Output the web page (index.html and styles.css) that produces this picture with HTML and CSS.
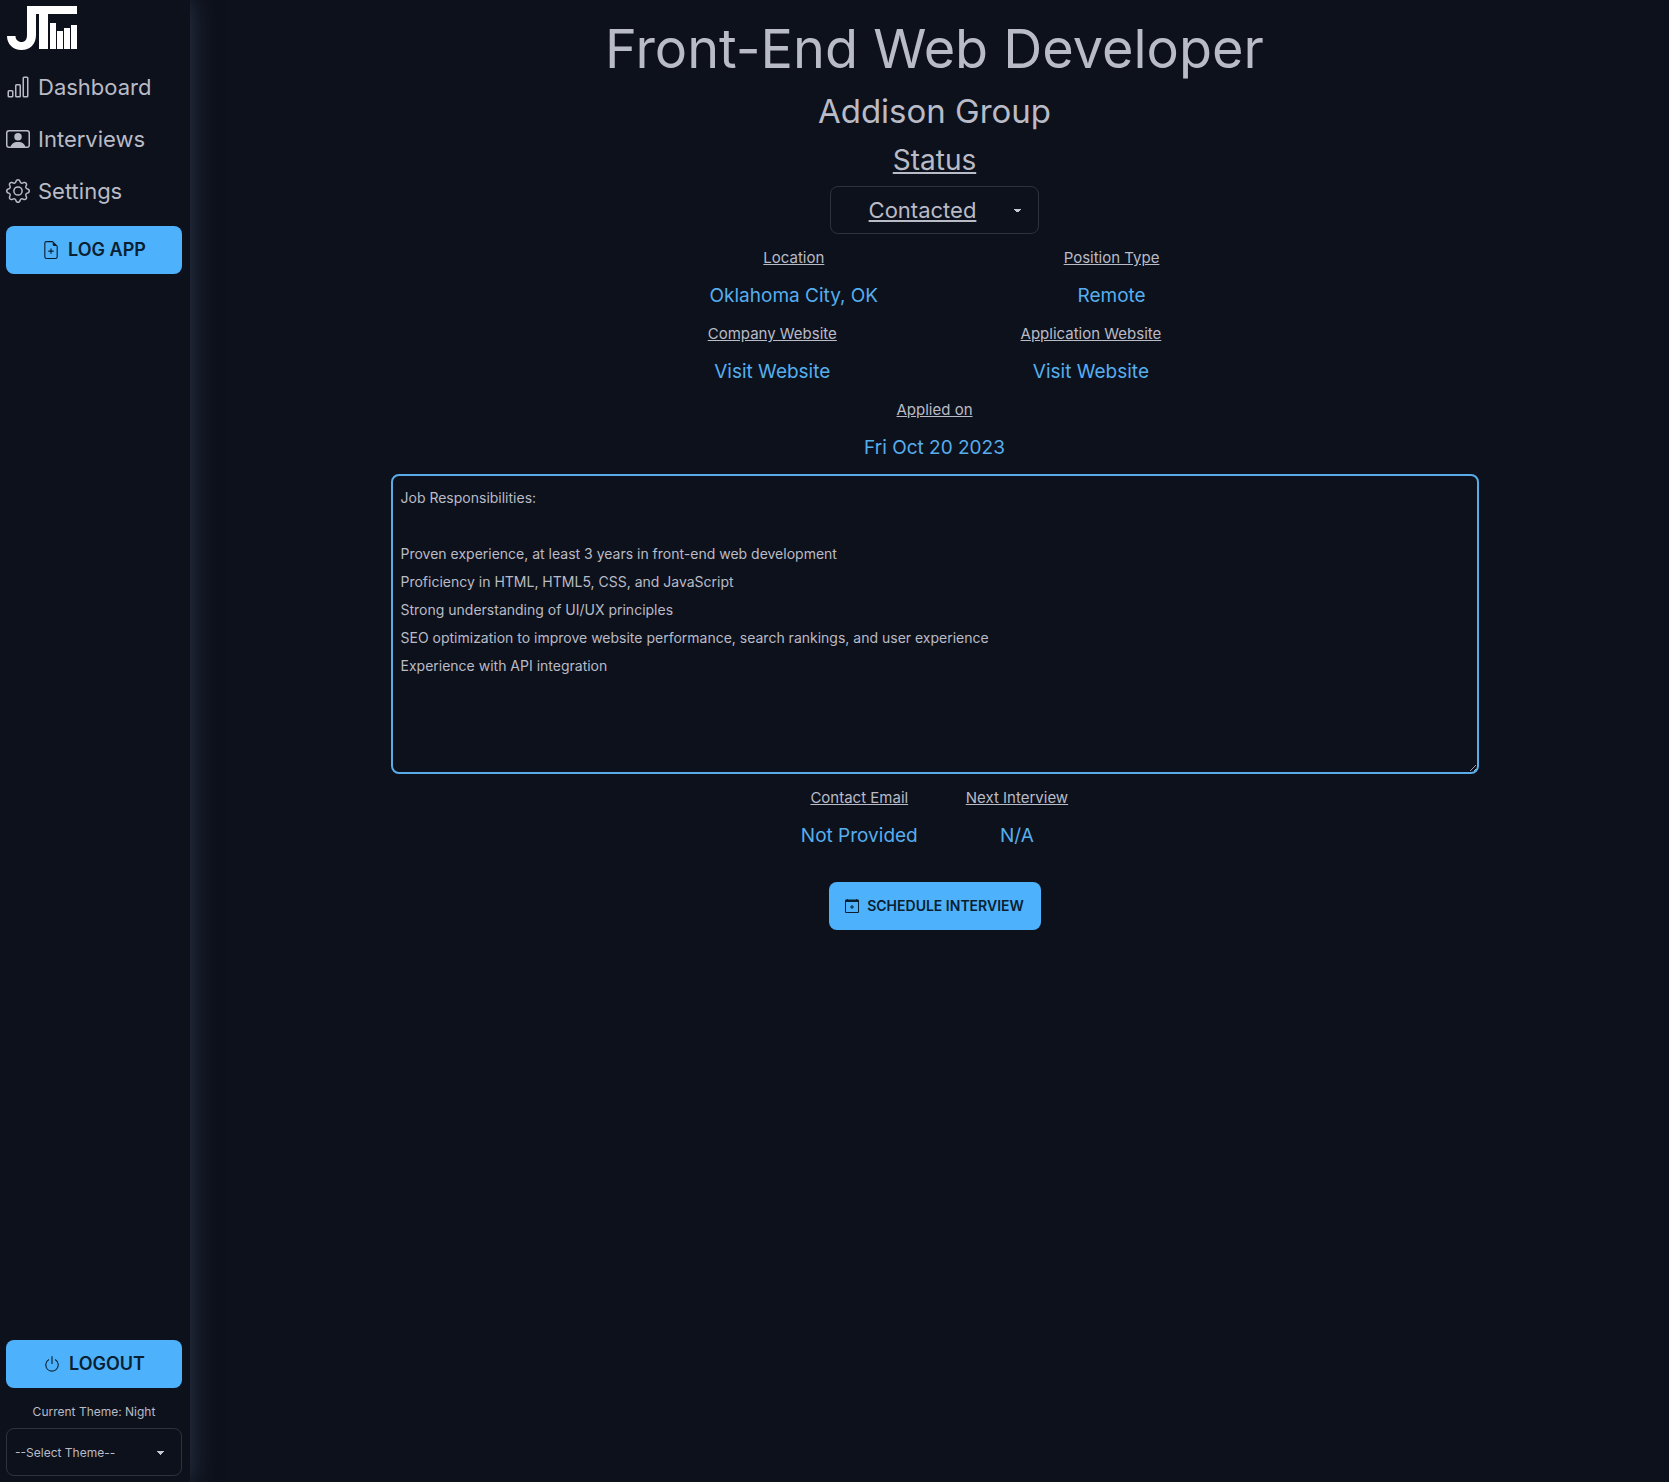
FILE: index.html
```html
<!DOCTYPE html>
<html lang="en">
<head>
<meta charset="utf-8">
<meta name="viewport" content="width=device-width, initial-scale=1">
<title>Front-End Web Developer</title>
<link rel="stylesheet" href="styles.css">
</head>
<body>
<div class="layout">
  <aside class="sidebar">
    <a class="logo" href="#" aria-label="Home">
      <svg width="70" height="44" viewBox="0 0 70 44" fill="#fff" aria-hidden="true">
        <path d="M20 0H70V8H41V43H32V8H29V29C29 38 23 44 14.500 44S0 38 0 30H8.500C8.500 33.500 11 36 14.500 36S20 33.500 20 29Z"/>
        <path d="M43 17h6v26h-6zM50 25h6v18h-6zM57 22h6v21h-6zM64 19h6v24h-6z"/>
      </svg>
    </a>
    <nav class="nav">
      <a class="nav-link" href="#">
        <svg class="icon" viewBox="0 0 16 16" fill="currentColor" aria-hidden="true"><path d="M11 2a1 1 0 0 1 1-1h2a1 1 0 0 1 1 1v12a1 1 0 0 1-1 1h-2a1 1 0 0 1-1-1zm1 0v12h2V2zM6 7a1 1 0 0 1 1-1h2a1 1 0 0 1 1 1v7a1 1 0 0 1-1 1H7a1 1 0 0 1-1-1zm1 0v7h2V7zM1 11a1 1 0 0 1 1-1h2a1 1 0 0 1 1 1v3a1 1 0 0 1-1 1H2a1 1 0 0 1-1-1zm1 0v3h2v-3z" fill-rule="evenodd"/></svg>
        Dashboard
      </a>
      <a class="nav-link" href="#">
        <svg class="icon" viewBox="0 0 16 16" fill="currentColor" aria-hidden="true"><path d="M8 9.050a2.500 2.500 0 1 0 0-5 2.500 2.500 0 0 0 0 5"/><path d="M2 2a2 2 0 0 0-2 2v8a2 2 0 0 0 2 2h12a2 2 0 0 0 2-2V4a2 2 0 0 0-2-2zm10.798 11c-.453-1.270-1.760-3-4.798-3-3.037 0-4.345 1.730-4.798 3H2a1 1 0 0 1-1-1V4a1 1 0 0 1 1-1h12a1 1 0 0 1 1 1v8a1 1 0 0 1-1 1z"/><path d="M3.200 13c.5-1.400 1.800-3 4.800-3s4.300 1.600 4.800 3z"/></svg>
        Interviews
      </a>
      <a class="nav-link" href="#">
        <svg class="icon" viewBox="0 0 16 16" fill="currentColor" aria-hidden="true"><path d="M8 4.754a3.246 3.246 0 1 0 0 6.492 3.246 3.246 0 0 0 0-6.492M5.754 8a2.246 2.246 0 1 1 4.492 0 2.246 2.246 0 0 1-4.492 0"/><path d="M9.796 1.343c-.527-1.790-3.065-1.790-3.592 0l-.094.319a.873.873 0 0 1-1.255.520l-.292-.160c-1.640-.892-3.433.902-2.540 2.541l.159.292a.873.873 0 0 1-.520 1.255l-.319.094c-1.790.527-1.790 3.065 0 3.592l.319.094a.873.873 0 0 1 .520 1.255l-.160.292c-.892 1.640.901 3.434 2.541 2.540l.292-.159a.873.873 0 0 1 1.255.520l.094.319c.527 1.790 3.065 1.790 3.592 0l.094-.319a.873.873 0 0 1 1.255-.520l.292.160c1.640.893 3.434-.902 2.540-2.541l-.159-.292a.873.873 0 0 1 .520-1.255l.319-.094c1.790-.527 1.790-3.065 0-3.592l-.319-.094a.873.873 0 0 1-.520-1.255l.160-.292c.893-1.640-.902-3.433-2.541-2.540l-.292.159a.873.873 0 0 1-1.255-.520zm-2.633.283c.246-.835 1.428-.835 1.674 0l.094.319a1.873 1.873 0 0 0 2.693 1.115l.291-.160c.764-.415 1.600.420 1.184 1.185l-.159.292a1.873 1.873 0 0 0 1.116 2.692l.318.094c.835.246.835 1.428 0 1.674l-.319.094a1.873 1.873 0 0 0-1.115 2.693l.160.291c.415.764-.420 1.600-1.185 1.184l-.291-.159a1.873 1.873 0 0 0-2.693 1.116l-.094.318c-.246.835-1.428.835-1.674 0l-.094-.319a1.873 1.873 0 0 0-2.692-1.115l-.292.160c-.764.415-1.600-.420-1.184-1.185l.159-.291A1.873 1.873 0 0 0 1.945 8.930l-.319-.094c-.835-.246-.835-1.428 0-1.674l.319-.094A1.873 1.873 0 0 0 3.060 4.377l-.160-.292c-.415-.764.420-1.600 1.185-1.184l.292.159a1.873 1.873 0 0 0 2.692-1.115z"/></svg>
        Settings
      </a>
    </nav>
    <button class="btn" type="button">
      <svg class="icon-sm" viewBox="0 0 16 16" fill="currentColor" aria-hidden="true"><path d="M8 6.500a.5.5 0 0 1 .5.5v1.500H10a.5.5 0 0 1 0 1H8.500V11a.5.5 0 0 1-1 0V9.500H6a.5.5 0 0 1 0-1h1.500V7a.5.5 0 0 1 .5-.5"/><path d="M14 4.500V14a2 2 0 0 1-2 2H4a2 2 0 0 1-2-2V2a2 2 0 0 1 2-2h5.500zm-3 0A1.500 1.500 0 0 1 9.500 3V1H4a1 1 0 0 0-1 1v12a1 1 0 0 0 1 1h8a1 1 0 0 0 1-1V4.500z"/></svg>
      LOG APP
    </button>
    <div class="sidebar-foot">
      <button class="btn" type="button">
        <svg class="icon-sm" viewBox="0 0 16 16" fill="currentColor" aria-hidden="true"><path d="M7.500 1v7h1V1z"/><path d="M3 8.812a5 5 0 0 1 2.578-4.375l-.485-.874A6 6 0 1 0 11 3.616l-.501.865A5 5 0 1 1 3 8.812"/></svg>
        LOGOUT
      </button>
      <label class="theme-label" for="theme">Current Theme: Night</label>
      <select class="select theme-select" id="theme"><option>--Select Theme--</option><option>Night</option></select>
    </div>
  </aside>
  <main class="main">
    <h1 class="title">Front-End Web Developer</h1>
    <h2 class="company">Addison Group</h2>
    <div class="status">
      <label class="status-label" for="status">Status</label>
      <select class="select status-select" id="status"><option>Contacted</option></select>
    </div>
    <dl class="facts">
      <div class="fact"><dt>Location</dt><dd>Oklahoma City, OK</dd></div>
      <div class="fact"><dt>Position Type</dt><dd>Remote</dd></div>
    </dl>
    <dl class="facts">
      <div class="fact"><dt>Company Website</dt><dd><a href="#">Visit Website</a></dd></div>
      <div class="fact"><dt>Application Website</dt><dd><a href="#">Visit Website</a></dd></div>
    </dl>
    <dl class="facts">
      <div class="fact"><dt>Applied on</dt><dd>Fri Oct 20 2023</dd></div>
    </dl>
    <textarea class="notes" aria-label="Job description">Job Responsibilities:

Proven experience, at least 3 years in front-end web development
Proficiency in HTML, HTML5, CSS, and JavaScript
Strong understanding of UI/UX principles
SEO optimization to improve website performance, search rankings, and user experience
Experience with API integration</textarea>
    <dl class="facts facts-close">
      <div class="fact"><dt>Contact Email</dt><dd>Not Provided</dd></div>
      <div class="fact"><dt>Next Interview</dt><dd>N/A</dd></div>
    </dl>
    <button class="btn btn-schedule" type="button">
      <svg class="icon-xs" viewBox="0 0 14 14" fill="currentColor" aria-hidden="true"><path fill-rule="evenodd" d="M2 0h1v.5h8V0h1v.5h1a1 1 0 0 1 1 1V13a1 1 0 0 1-1 1H1a1 1 0 0 1-1-1V1.500a1 1 0 0 1 1-1h1zM1 3v10h12V3z"/><path d="M6.500 6h1v1.500H9v1H7.500V10h-1V8.500H5v-1h1.500z"/></svg>
      SCHEDULE INTERVIEW
    </button>
  </main>
</div>
</body>
</html>
```
FILE: styles.css
```css
* { box-sizing: border-box; margin: 0; }

body {
  background: #0d111c;
  color: #b9bbc6;
  font-family: Inter, "Liberation Sans", sans-serif;
  font-size: 15px;
  line-height: 24px;
}

a { color: inherit; text-decoration: none; }

.layout { display: flex; min-height: 100vh; }

.sidebar {
  display: flex;
  flex-direction: column;
  flex: none;
  width: 190px;
  padding: 6px 8px 6px 6px;
  box-shadow: 0 0 24px #30384d;
}

.logo { height: 65px; padding-left: 1px; }
.logo svg { display: block; }

.nav { display: flex; flex-direction: column; gap: 20px; margin-bottom: 19px; }
.nav-link { display: flex; align-items: center; gap: 8px; font-size: 22px; line-height: 32px; }
.icon { flex: none; width: 24px; height: 24px; }
.icon-sm { width: 18px; height: 18px; }
.icon-xs { width: 14px; height: 14px; }

.btn {
  display: flex;
  align-items: center;
  justify-content: center;
  gap: 8px;
  width: 100%;
  height: 48px;
  padding: 0 16px;
  border: 0;
  border-radius: 8px;
  background: #4db2fb;
  color: #0a2030;
  font: 600 18px/24px Inter, "Liberation Sans", sans-serif;
}

.sidebar-foot { display: flex; flex-direction: column; margin-top: auto; }
.theme-label { margin: 16px 0 8px; font-size: 12px; line-height: 16px; text-align: center; }

.select {
  height: 48px;
  border: 1px solid #2e323e;
  border-radius: 8px;
  appearance: none;
  background-color: transparent;
  background-image: linear-gradient(45deg, transparent 50%, #c5c7d0 50%), linear-gradient(135deg, #c5c7d0 50%, transparent 50%);
  background-repeat: no-repeat;
  background-size: 4px 4px;
  background-position: calc(100% - 20px) 22px, calc(100% - 16px) 22px;
  color: inherit;
  font-family: inherit;
}
.theme-select { width: 100%; padding: 0 32px 0 8px; font-size: 12px; }

.main {
  display: flex;
  flex: 1;
  flex-direction: column;
  align-items: center;
  gap: 12px;
  min-width: 0;
  margin-left: 10px;
  padding: 18px 16px;
}

.title { font-size: 54px; font-weight: 400; line-height: 62px; text-align: center; }
.company { font-size: 33px; font-weight: 400; line-height: 38px; }

.status { display: flex; flex-direction: column; align-items: center; gap: 8px; }
.status-label { font-size: 28px; line-height: 36px; text-decoration: underline; }
.status-select {
  width: 209px;
  padding: 0 40px 0 16px;
  font-size: 22px;
  text-align: center;
  text-decoration: underline;
}

.facts { display: flex; justify-content: space-evenly; width: 100%; max-width: 821px; }
.facts-close { justify-content: center; gap: 48px; }
.fact { display: flex; flex-direction: column; align-items: center; gap: 12px; }
.fact dt { text-decoration: underline; }
.fact dd { color: #56aeee; font-size: 19px; line-height: 28px; }

.notes {
  display: block;
  width: 100%;
  max-width: 1088px;
  height: 300px;
  padding: 8px;
  border: 2px solid #5aabe8;
  border-radius: 8px;
  background: transparent;
  color: inherit;
  font: 14px/28px Inter, "Liberation Sans", sans-serif;
  resize: vertical;
}

.btn-schedule { width: 212px; margin-top: 20px; font-size: 14px; }
```
